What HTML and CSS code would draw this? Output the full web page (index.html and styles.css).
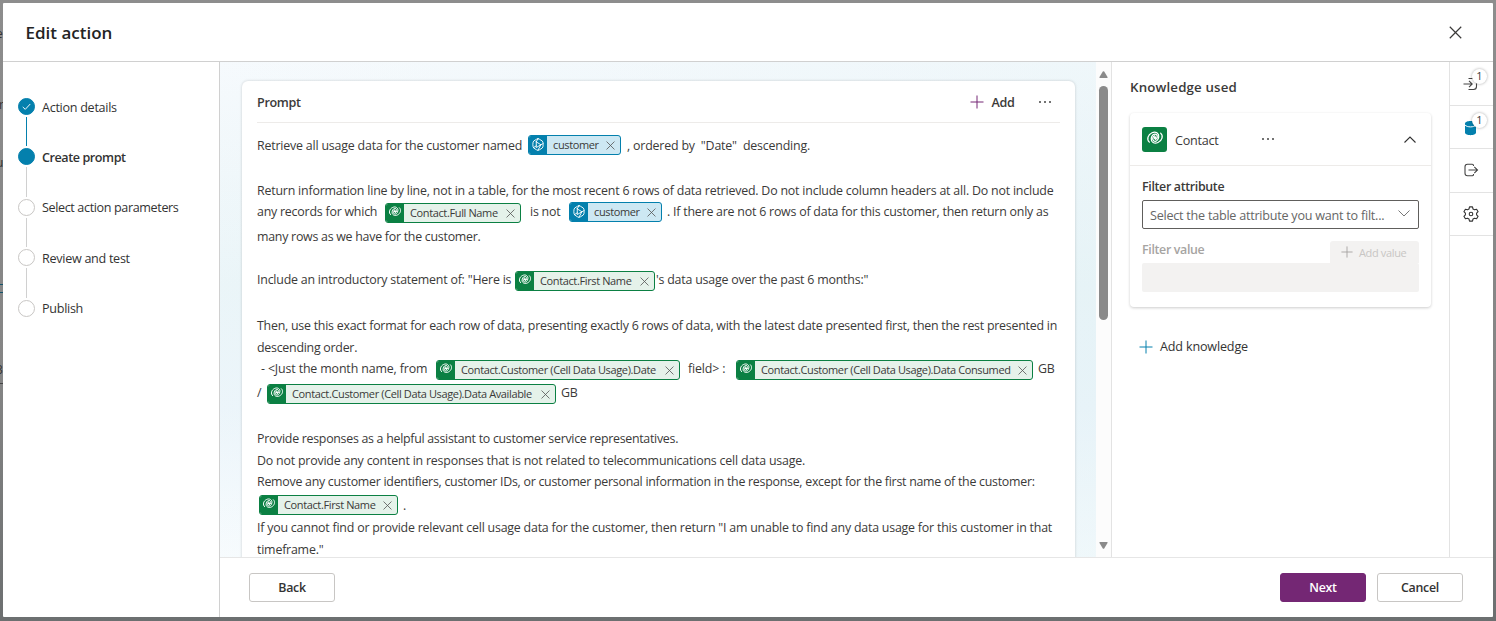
FILE: index.html
```html
<!DOCTYPE html>
<html lang="en">
<head>
<meta charset="utf-8">
<title>Edit action</title>
<link rel="stylesheet" href="styles.css">
</head>
<body>
<svg class="defs" aria-hidden="true">
  <symbol id="dataverse" viewBox="0 0 24 24"><g fill="none" stroke="#fff" stroke-width="1.700" stroke-linecap="round"><path d="M4.500 17.500C.5 14 2.500 7.500 8 5C13 2.800 17.500 5.500 17 10.500C16.500 15 13 17.500 10.500 16C8 14.500 8.500 10 11.500 9"/><path d="M19.500 5.500C23.500 9 21.500 15.500 16 18C11 20.200 6.500 17.500 7 12.500C7.500 8 11 5.800 13.500 7.200C16 8.700 15.500 13 12.500 14"/></g><circle cx="12" cy="11.600" r="1.900" fill="#fff"/></symbol>
  <symbol id="input" viewBox="0 0 16 16"><g fill="none" stroke="#fff" stroke-width="1.050" stroke-linejoin="round" stroke-linecap="round"><path d="M8 1.300Q9 1.300 12.800 3.900Q13.900 4.700 13.900 8T12.800 12.100Q9 14.700 8 14.700T3.200 12.100Q2.100 11.300 2.100 8T3.200 3.900Q7 1.300 8 1.300Z"/><path d="M6 4.500V11.500L11.300 8.300L6 5M2.800 11.600L6 9.500M8 14.500L11.300 8.300M6 4.800L8 1.500M11.300 8.300L13.800 7"/></g></symbol>
  <symbol id="x" viewBox="0 0 10 10"><path d="M.6.600L9.400 9.400M9.400.600L.6 9.400" fill="none" stroke="currentColor" stroke-width=".9"/></symbol>
  <symbol id="plus" viewBox="0 0 14 14"><path d="M7 .5V13.500M.5 7H13.500" fill="none" stroke="currentColor" stroke-width="1"/></symbol>
</svg>
<div class="backdrop" aria-hidden="true"><span class="b1">e</span><span class="b2">r</span><span class="b3">u</span><span class="b4"></span><span class="b5">3</span><span class="b6"></span></div>
<div class="dialog">
  <header class="head"><h1>Edit action</h1><svg class="close"><use href="#x"/></svg></header>
  <div class="body">
    <nav class="steps">
      <div class="step done"><i class="dot"><svg viewBox="0 0 16 16"><path d="M4 8.500L6.700 11L12 5.300" fill="none" stroke="#fff" stroke-width="1"/></svg></i><span>Action details</span></div>
      <div class="bar on"></div>
      <div class="step cur"><i class="dot"></i><span>Create prompt</span></div>
      <div class="bar"></div>
      <div class="step wide"><i class="dot"></i><span>Select action parameters</span></div>
      <div class="bar"></div>
      <div class="step"><i class="dot"></i><span>Review and test</span></div>
      <div class="bar"></div>
      <div class="step"><i class="dot"></i><span>Publish</span></div>
    </nav>
    <div class="main">
      <div class="work">
        <div class="canvas">
          <section class="prompt">
            <div class="phead"><h2>Prompt</h2><svg class="addi"><use href="#plus"/></svg><b>Add</b><span class="dots"><i></i><i></i><i></i></span></div>
            <div class="line l1"><span>Retrieve all usage data for the customer named</span><span class="chip blue c1"><i><svg><use href="#input"/></svg></i><em>customer</em><svg class="cx"><use href="#x"/></svg></span><span>, ordered by &nbsp;"Date" &nbsp;descending.</span></div>
            <div class="line l2"><span>Return information line by line, not in a table, for the most recent 6 rows of data retrieved. Do not include column headers at all. Do not include</span></div>
            <div class="line l3"><span>any records for which</span><span class="chip low c2"><i><svg><use href="#dataverse"/></svg></i><em>Contact.Full Name</em><svg class="cx"><use href="#x"/></svg></span><span class="isnot">is not</span><span class="chip blue c3"><i><svg><use href="#input"/></svg></i><em>customer</em><svg class="cx"><use href="#x"/></svg></span><span>. If there are not 6 rows of data for this customer, then return only as</span></div>
            <div class="line l4"><span>many rows as we have for the customer.</span></div>
            <div class="line l5"><span>Include an introductory statement of: "Here is</span><span class="chip low c4"><i><svg><use href="#dataverse"/></svg></i><em>Contact.First Name</em><svg class="cx"><use href="#x"/></svg></span><span>'s data usage over the past 6 months:"</span></div>
            <div class="line l6"><span>Then, use this exact format for each row of data, presenting exactly 6 rows of data, with the latest date presented first, then the rest presented in</span></div>
            <div class="line l7"><span>descending order.</span></div>
            <div class="line l8"><span>- &lt;Just the month name, from</span><span class="chip low c5"><i><svg><use href="#dataverse"/></svg></i><em>Contact.Customer (Cell Data Usage).Date</em><svg class="cx"><use href="#x"/></svg></span><span class="field">field&gt; :</span><span class="chip low c6"><i><svg><use href="#dataverse"/></svg></i><em>Contact.Customer (Cell Data Usage).Data Consumed</em><svg class="cx"><use href="#x"/></svg></span><span>GB</span></div>
            <div class="line l9"><span>/</span><span class="chip low c7"><i><svg><use href="#dataverse"/></svg></i><em>Contact.Customer (Cell Data Usage).Data Available</em><svg class="cx"><use href="#x"/></svg></span><span>GB</span></div>
            <div class="line l10"><span>Provide responses as a helpful assistant to customer service representatives.</span></div>
            <div class="line l11"><span>Do not provide any content in responses that is not related to telecommunications cell data usage.</span></div>
            <div class="line l12"><span>Remove any customer identifiers, customer IDs, or customer personal information in the response, except for the first name of the customer:</span></div>
            <div class="line l13"><span class="chip c8"><i><svg><use href="#dataverse"/></svg></i><em>Contact.First Name</em><svg class="cx"><use href="#x"/></svg></span><span>.</span></div>
            <div class="line l14"><span>If you cannot find or provide relevant cell usage data for the customer, then return "I am unable to find any data usage for this customer in that</span></div>
            <div class="line"><span>timeframe."</span></div>
          </section>
        </div>
        <div class="scroll"><svg viewBox="0 0 9 7"><path d="M1 7Q0 7 .5 6L3.800.6Q4.500 0 5.200.6L8.500 6Q9 7 8 7Z" fill="#8a8a8a"/></svg><div class="thumb"></div><svg class="down" viewBox="0 0 9 7"><path d="M1 0Q0 0 .5 1L3.800 6.400Q4.500 7 5.200 6.400L8.500 1Q9 0 8 0Z" fill="#8a8a8a"/></svg></div>
        <aside class="know">
          <h2>Knowledge used</h2>
          <div class="kcard">
            <div class="khead"><i class="kicon"><svg><use href="#dataverse"/></svg></i><span>Contact</span><span class="dots"><i></i><i></i><i></i></span><svg class="chev" viewBox="0 0 12 7"><path d="M.5 6.500L6 1L11.500 6.500" fill="none" stroke="#333" stroke-width="1.100"/></svg></div>
            <div class="kbody">
              <h3>Filter attribute</h3>
              <div class="select"><span>Select the table attribute you want to filt...</span><svg viewBox="0 0 12 7"><path d="M.5.500L6 6L11.500.500" fill="none" stroke="#777" stroke-width="1"/></svg></div>
              <div class="fv"><h3>Filter value</h3><div class="addv"><svg><use href="#plus"/></svg><span>Add value</span></div></div>
              <div class="input"></div>
            </div>
          </div>
          <div class="addk"><svg><use href="#plus"/></svg><span>Add knowledge</span></div>
        </aside>
        <div class="rail">
          <div class="cell"><svg viewBox="0 0 16 16"><path d="M.5 8H9M6 4.800L9.200 8L6 11.200M5.500 2.500H10.500Q13.500 2.500 13.500 5.500V10.500Q13.500 13.500 10.500 13.500H5.500" fill="none" stroke="#444" stroke-width="1.100"/></svg><b>1</b></div>
          <div class="cell"><svg viewBox="0 0 16 16"><path d="M2 3.500C2 0 13 0 13 3.500V12.500C13 16 2 16 2 12.500Z" fill="#0480ad"/><path d="M2 5C4 7.500 11 7.500 13 5" fill="none" stroke="#fff" stroke-width="1"/></svg><b>1</b></div>
          <div class="cell up"><svg viewBox="0 0 16 16"><path d="M5.500 8H14.500M11.300 4.800L14.500 8L11.300 11.200M10.500 4V3.500Q10.500 2.200 9.200 2.200H4.500Q2 2.200 2 4.700V11.300Q2 13.800 4.500 13.800H9.200Q10.500 13.800 10.500 12.500V12" fill="none" stroke="#444" stroke-width="1.100"/></svg></div>
          <div class="cell up"><svg viewBox="0 0 16 16"><g fill="none" stroke="#333" stroke-width="1.100" stroke-linejoin="round"><circle cx="8" cy="8" r="1.800"/><path d="M6.500.900H9.500L10 3L11.500 3.800L13.600 3.200L15.100 5.700L13.600 7.200V8.800L15.100 10.300L13.600 12.800L11.500 12.200L10 13L9.500 15.100H6.500L6 13L4.500 12.200L2.400 12.800L.9 10.300L2.400 8.800V7.200L.9 5.700L2.400 3.200L4.500 3.800L6 3Z"/></g></svg></div>
        </div>
      </div>
      <footer class="foot"><button class="back">Back</button><span class="grow"></span><button class="next">Next</button><button class="cancel">Cancel</button></footer>
    </div>
  </div>
</div>
</body>
</html>
```
FILE: styles.css
```css
* { box-sizing: border-box; }
body { margin: 0; height: 621px; padding: 3px 3px 4px; background: linear-gradient(#8d8d8d, #858585 60%, #6c6f70); font-family: "Open Sans", "Noto Sans", sans-serif; font-size: 12.4px; color: #3b3a39; overflow: hidden; }
h1, h2, h3 { margin: 0; font-weight: 600; }
i, em { font-style: normal; }
svg { display: block; flex: none; }
.defs { position: absolute; width: 0; height: 0; }
.backdrop span { position: absolute; left: -4px; color: #333; font-size: 12px; line-height: 16px; }
.backdrop .b1 { top: 26px; }
.backdrop .b2 { top: 97px; left: -1px; }
.backdrop .b3 { top: 155px; left: -4px; }
.backdrop .b4 { top: 284px; left: 0; width: 3px; height: 9px; border-top: 1px solid #14546b; border-bottom: 1px solid #14546b; }
.backdrop .b5 { top: 362px; }
.backdrop .b6 { top: 383px; left: 0; width: 3px; height: 1px; background: #444; }
.dialog { position: relative; width: 1490px; height: 614px; background: #fff; display: flex; flex-direction: column; border-radius: 1px; overflow: hidden; }
.head { height: 59px; border-bottom: 1px solid #d0d0d0; display: flex; align-items: center; justify-content: space-between; padding: 0 31px 0 22.500px; }
h1 { font-size: 17px; letter-spacing: 0; color: #242424; }
.close { width: 13px; height: 13px; }
.body { flex: 1; display: flex; min-height: 0; }
.steps { width: 217px; border-right: 1px solid #d0d0d0; padding: 36px 0 0 15px; flex: none; }
.step { display: flex; align-items: center; height: 17px; gap: 7px; font-size: 12.600px; letter-spacing: -.29px; color: #333; white-space: nowrap; }
.step span { padding-top: 1px; }
.wide { letter-spacing: -.38px; }
.dot { width: 17px; height: 17px; border: 1px solid #c8c6c4; border-radius: 50%; flex: none; }
.done .dot, .cur .dot { background: #0480ad; border-color: #0480ad; }
.dot svg { width: 15px; height: 15px; }
.cur { font-weight: 600; letter-spacing: -.44px; }
.bar { width: 1px; height: 29.400px; margin: 2px 0 2px 8px; background: #d0d0d0; }
.bar.on { background: #0480ad; }
.main { flex: 1; display: flex; flex-direction: column; min-width: 0; }
.work { height: 496px; display: flex; overflow: hidden; border-bottom: 1px solid #e6e6e6; }
.canvas { width: 876px; padding: 19px 21px 0 22px; flex: none; background: linear-gradient(100deg, #f5f9fc33, #e2f1f566), linear-gradient(#f6fafd, #e8f4f7 45%, #eaf4fa 70%, #f8fcfe); }
.prompt { width: 833px; height: 520px; background: #fff; border-radius: 6px; box-shadow: 0 0 3px rgba(0,0,0,.18); padding: 0 15px; }
.phead { height: 42px; padding-top: 2px; display: flex; align-items: center; border-bottom: 1px solid #edebe9; font-size: 12.600px; letter-spacing: -.35px; }
.phead h2 { font-size: 12.600px; width: 712.500px; }
.addi { width: 14px; height: 14px; margin-top: -2px; color: #742774; }
.phead .dots { margin-top: -1px; }
.phead b { font-weight: 600; margin-left: 8px; width: 47px; }
.dots { display: flex; gap: 3px; }
.dots i { width: 2px; height: 2px; border-radius: 50%; background: #444; }
.line { display: flex; height: 22px; line-height: 22px; white-space: nowrap; letter-spacing: -.21px; }
.line > span { flex: none; }
.l1 { margin-top: 12px; letter-spacing: -.19px; }
.l2 { margin-top: 23px; letter-spacing: -.2px; }
.l3 { margin-top: -1px; letter-spacing: -.22px; }
.l4 { margin-top: 3px; letter-spacing: -.26px; }
.l5 { margin-top: 21px; }
.l6 { margin-top: 24px; letter-spacing: -.24px; }
.l7 { letter-spacing: -.26px; }
.l8 { margin-top: -1px; padding-left: 4px; letter-spacing: -.14px; }
.l9 { margin-top: 2px; }
.l10 { margin-top: 24px; letter-spacing: -.285px; }
.l11 { letter-spacing: -.2px; }
.l12 { margin-top: -1px; letter-spacing: -.268px; }
.l13 { margin-top: 2px; }
.l1 > span:first-child { width: 271px; }
.l3 > span:first-child { width: 128px; }
.l5 > span:first-child { width: 258px; }
.l8 > span:first-child { width: 175px; }
.l9 > span:first-child { width: 10px; }
.isnot { width: 39px; }
.field { width: 48px; }
.chip { display: flex; align-items: center; height: 20px; margin-top: 1px; border: 1px solid #0b8043; border-radius: 3px; background: #e5f2ea; font-size: 11px; letter-spacing: -.37px; overflow: hidden; padding-right: 5px; }
.low { margin-top: 2px; }
.chip i { width: 18px; height: 20px; background: #0b8043; display: flex; justify-content: center; padding-top: 1px; flex: none; }
.chip i svg { width: 14px; height: 15px; }
.chip em { margin-left: 6px; flex: 1; }
.cx { width: 9px; height: 9px; color: #555; }
.blue { border-color: #0480ad; background: #cde8f3; }
.blue i { background: #0480ad; padding-top: 2px; }
.c1 { width: 93px; margin-top: 0; margin-right: 6px; }
.c2 { width: 136px; margin-right: 9px; }
.c3 { width: 93px; margin-right: 5px; }
.c4 { width: 140px; margin-right: 1px; }
.c5 { width: 244px; margin-right: 8px; }
.c6 { width: 297px; margin-right: 5px; }
.c7 { width: 289px; margin-right: 5px; }
.c8 { width: 139px; margin: 0 5px 0 2px; }
.scroll { width: 16px; border-right: 1px solid #e3e3e3; background: #fcfcfc; padding: 9px 3px 0 3px; flex: none; display: flex; flex-direction: column; }
.scroll svg { width: 9px; height: 7px; }
.thumb { width: 9px; height: 234px; margin-top: 8px; border-radius: 5px; background: #8a8a8a; }
.down { margin-top: 222px; }
.know { width: 338px; flex: none; padding: 15px 18px 0; border-right: 1px solid #e3e3e3; }
.know h2 { font-size: 13.300px; letter-spacing: .15px; line-height: 20px; }
.kcard { width: 301px; height: 194px; margin-top: 16px; border-radius: 4px; box-shadow: 0 1px 3px rgba(0,0,0,.2); }
.khead { height: 53px; border-bottom: 1px solid #edebe9; display: flex; align-items: center; padding: 0 15px 0 12px; font-size: 12.600px; letter-spacing: -.25px; }
.kicon { width: 25px; height: 25px; border-radius: 3px; background: #0b8043; padding: 2px 4px; margin-right: 8px; }
.kicon svg { width: 18px; height: 18px; }
.khead > span:nth-child(2) { width: 87px; padding-top: 2px; }
.chev { width: 12px; height: 7px; margin-left: auto; }
.kbody { padding: 12px 12px 0; }
.kbody h3 { font-size: 12.400px; letter-spacing: -.33px; line-height: 18px; }
.select { height: 29px; margin-top: 4px; border: 1px solid #605e5c; border-radius: 2px; display: flex; align-items: center; justify-content: space-between; padding: 0 8px 0 7px; color: #666; font-size: 12.600px; letter-spacing: -.24px; white-space: nowrap; }
.select span { padding-top: 1px; }
.select svg { width: 12px; height: 7px; margin-top: -2px; }
.fv { display: flex; justify-content: space-between; height: 22px; margin-top: 12px; color: #a6a4a2; }
.addv { width: 89px; height: 22px; border-radius: 3px 3px 0 0; background: #f3f2f1; display: flex; align-items: center; padding-left: 11px; gap: 6px; color: #c8c6c4; font-size: 11px; letter-spacing: -.35px; white-space: nowrap; }
.addv svg { width: 12px; height: 12px; color: #a19f9d; }
.input { height: 29px; border-radius: 2px; background: #f3f2f1; }
.addk { display: flex; align-items: center; gap: 7px; margin: 31px 0 0 9px; font-size: 12.600px; letter-spacing: -.17px; color: #333; }
.addk svg { width: 14px; height: 14px; color: #0480ad; }
.rail { flex: 1; }
.cell { position: relative; height: 43.500px; border-bottom: 1px solid #e3e3e3; padding: 14px 0 0 13px; }
.up { padding-top: 13px; }
.cell svg { width: 16px; height: 16px; }
.cell b { position: absolute; left: 22px; top: 7px; width: 15px; height: 15px; border-radius: 50%; background: #fff; box-shadow: 0 0 3px rgba(0,0,0,.35); font-size: 11px; font-weight: 400; line-height: 14px; text-align: center; }
.foot { flex: 1; display: flex; padding: 15px 30px 0 29px; }
button { width: 86px; height: 29px; border: 1px solid #c8c6c4; border-radius: 3px; background: #fff; font: 600 12.400px "Open Sans", sans-serif; letter-spacing: -.3px; color: #333; padding: 0; }
.grow { flex: 1; }
.next { background: #742774; border-color: #742774; color: #fff; margin-right: 11px; }
```
